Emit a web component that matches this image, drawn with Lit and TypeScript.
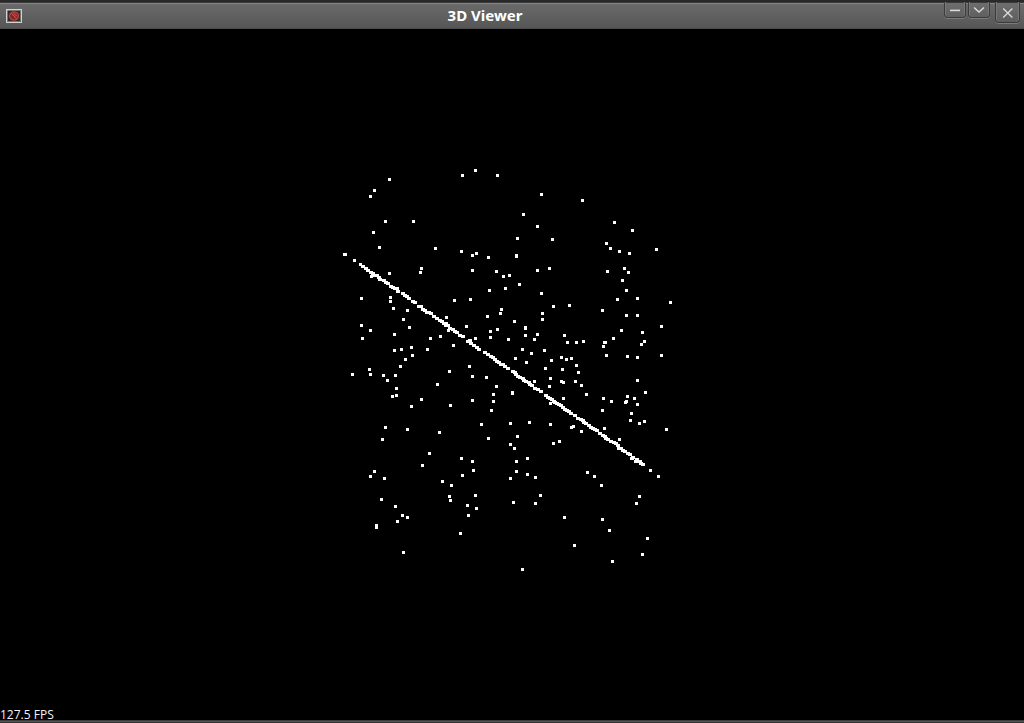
import { LitElement, html, css, svg } from "lit";
import { customElement, property } from "lit/decorators.js";

type Point = [number, number];

// Scattered samples on the cylinder wall, as x,y centres in view space.
const SCATTER = `
389,179 374,190 370,196 385,221 413,221 373,232 379,247 462,175 475,170 497,175 435,248 461,251 472,255 476,253 488,257
541,194 582,200 523,214 537,226 614,222 632,230 517,238 552,239 606,243 610,248 619,251 629,253 656,249 516,255 516,256
549,268 537,270 607,271 624,268 628,272 509,275 622,280 519,284 505,288 541,293 626,290 617,299 637,298 670,302 553,306
569,305 602,310 542,313 626,315 637,315 542,319 389,273 421,268 420,272 371,276 361,298 390,297 390,301 393,308 407,310
454,300 403,319 361,325 370,330 409,327 394,334 362,338 430,338 440,336 446,317 394,350 401,349 411,347 427,349 412,355
453,345 405,359 400,366 369,369 370,374 352,374 383,375 395,375 387,380 449,371 396,388 392,396 396,395 437,384 421,399
411,406 450,405 448,330 472,270 496,271 503,276 489,290 470,299 501,309 500,313 487,316 514,321 525,327 525,328 497,329
490,331 490,337 525,335 537,334 534,339 466,326 508,339 475,338 564,335 567,342 522,349 531,353 544,350 515,358 526,362
551,360 561,357 566,359 469,366 545,368 562,369 472,376 486,377 550,378 534,381 561,381 563,382 549,386 496,386 493,394
493,401 512,392 512,393 472,400 491,410 563,398 550,403 481,424 510,423 529,422 550,424 661,326 621,330 642,332 576,342
583,341 613,338 604,342 605,342 603,346 644,341 641,344 606,355 627,356 637,357 661,355 571,358 576,365 578,372 575,381
581,385 637,380 586,394 645,392 603,398 611,401 602,410 627,396 626,401 625,402 634,398 637,404 631,413 630,420 639,423
644,421 666,429 571,427 573,426 581,431 604,428 619,439 587,472 594,476 601,485 650,470 658,476 385,427 407,429 382,439
439,432 488,438 517,436 510,444 514,448 429,453 422,465 461,458 472,461 516,461 527,458 374,471 370,476 384,478 473,470
462,475 516,471 527,474 510,478 535,477 442,481 451,485 449,496 450,500 475,495 513,502 535,503 540,495 381,499 395,506
467,505 476,508 468,515 402,515 407,517 397,521 376,525 376,527 460,533 403,552 522,569 553,443 559,441 639,496 636,503
564,517 602,519 609,530 574,545 647,538 642,554 612,561 344,254 345,254 354,260 360,264`;

// Dense samples along the fitted plane, seen edge-on.
const PLANE = `
362,266 365,268 367,270 370,272 372,273 374,275 376,275 378,277 379,279 383,280 385,282
387,283 390,286 392,287 394,288 396,288 397,291 402,293 404,295 406,296 408,298 412,301 414,302 418,306 420,306 422,309
424,310 426,312 428,312 430,313 433,316 436,318 439,320 441,321 443,323 445,323 445,325 447,325 449,328 452,329 454,331
456,332 459,335 462,336 467,341 469,340 470,343 473,345 476,347 478,349 484,352 487,354 490,356 492,357 494,359 496,361
498,362 500,364 502,364 504,366 507,368 512,371 514,372 515,374 517,376 519,377 522,378 523,380 525,381 528,382 529,384
531,385 534,388 537,389 540,391 545,395 547,397 549,398 551,399 553,401 554,402 556,403 558,404 560,405 562,407 564,409
566,410 568,411 570,413 574,415 577,418 580,419 582,420 583,422 585,423 588,425 590,427 592,428 594,429 596,430 599,433
602,435 604,436 605,438 607,439 610,441 613,442 615,443 617,445 618,448 620,448 622,450 624,451 627,453 629,454 632,457
631,458 635,461 636,459 639,461 640,463 642,464`;

const parse = (text: string): Point[] =>
  text.trim().split(/\s+/).map((pair) => pair.split(",").map(Number) as Point);

const squares = (points: Point[], width: number) =>
  points.map(([x, y]) => `M${x - 1} ${y - 1}h${width}v3h-${width}z`).join("");

@customElement("point-cloud")
class PointCloud extends LitElement {
  @property({ attribute: false }) scatter: Point[] = [];
  @property({ attribute: false }) plane: Point[] = [];

  static styles = css`
    :host {
      display: block;
      min-height: 0;
      overflow: hidden;
    }
    .cloud {
      display: block;
      width: 100%;
      height: 100%;
      fill: #fff;
    }
  `;

  render() {
    return html`<svg class="cloud" viewBox="0 29 1024 691" role="img" aria-label="Point cloud">
      ${svg`<path d=${squares(this.scatter, 3)} shape-rendering="crispEdges"></path>
      <path d=${squares(this.plane, 4)} shape-rendering="crispEdges"></path>`}
    </svg>`;
  }
}

@customElement("app-root")
class AppRoot extends LitElement {
  private scatter = parse(SCATTER);
  private plane = parse(PLANE);

  static styles = css`
    :host {
      display: flex;
      flex-direction: column;
      height: 100vh;
      background: #000;
      color: #fff;
    }
    .titlebar {
      display: flex;
      height: 29px;
      box-sizing: border-box;
      padding: 0 4px 0 6px;
      border-top: 2px solid #292929;
      border-bottom: 1px solid #4c4c4c;
      background: linear-gradient(#3a3a3a 0 1px, #858585 1px 2px, #6a6a6a 2px, #565656);
    }
    .app-icon {
      width: 16px;
      height: 14px;
      margin-top: 7px;
    }
    .title {
      flex: 1;
      margin: 0;
      padding-left: 4px;
      text-align: center;
      font: bold 15px/26px "Noto Sans", "Open Sans", sans-serif;
    }
    .controls {
      display: flex;
      align-items: flex-start;
      gap: 2px;
    }
    .control {
      display: flex;
      justify-content: center;
      width: 22px;
      height: 16px;
      padding: 0;
      box-sizing: border-box;
      border: 1px solid #3b3b3b;
      border-top: 0;
      border-radius: 0 0 4px 4px;
      background: linear-gradient(#3a3a3a 0 1px, #6e6e6e 1px, #5f5f5f);
      box-shadow: 0 1px 0 #7c7c7c, inset 1px 0 0 #777, inset -1px 0 0 #777;
    }
    .close {
      width: 25px;
      height: 21px;
      margin-left: 3px;
    }
    .glyph {
      flex: none;
      width: 12px;
      height: 20px;
      fill: none;
      stroke: #dcdcdc;
    }
    .stage {
      display: grid;
      grid-template: minmax(0, 1fr) / minmax(0, 1fr);
      flex: 1;
      min-height: 0;
    }
    .stage > * {
      grid-area: 1 / 1;
    }
    .fps {
      align-self: end;
      justify-self: start;
      font: 12px/10px "Open Sans", sans-serif;
      color: #f4f4f4;
    }
    .edge {
      height: 3px;
      background: linear-gradient(#3c3c3f 0 1px, #535356 1px 2px, #343434 2px);
    }
  `;

  render() {
    return html`
      <header class="titlebar">
        <svg class="app-icon" viewBox="0 0 16 14" aria-hidden="true">
          <rect x=".5" y=".5" width="15" height="13" fill="#2a2d2d" stroke="#d2cfcc"></rect>
          <rect x="1.5" y="1.5" width="13" height="11" fill="none" stroke="#a9a5a3" stroke-width=".6"></rect>
          <ellipse cx="8" cy="7" rx="4.6" ry="4.2" fill="#872f30" stroke="#bd3c3c" stroke-width="1.2"></ellipse>
          <path d="M5.5 4.5l5 5M7.5 4l3 3" stroke="#d05a55" stroke-width=".9"></path>
          <path d="M5.2 6.8l3 3" stroke="#552427" stroke-width=".9"></path>
        </svg>
        <h1 class="title">3D Viewer</h1>
        <div class="controls">
          <button class="control" aria-label="Minimize">
            <svg class="glyph" viewBox="0 0 12 20"><path d="M1 8.4h10" stroke-width="1.6"></path></svg>
          </button>
          <button class="control" aria-label="Maximize">
            <svg class="glyph" viewBox="0 0 12 20"><path d="M1 5.5l5 4.6 5-4.6" stroke-width="1.4"></path></svg>
          </button>
          <button class="control close" aria-label="Close">
            <svg class="glyph" viewBox="0 0 12 20"><path d="M1.2 6.5l9.2 9M10.4 6.5l-9.2 9" stroke-width="1.3"></path></svg>
          </button>
        </div>
      </header>
      <main class="stage">
        <point-cloud .scatter=${this.scatter} .plane=${this.plane}></point-cloud>
        <output class="fps">127.5 FPS</output>
      </main>
      <div class="edge"></div>
    `;
  }
}
